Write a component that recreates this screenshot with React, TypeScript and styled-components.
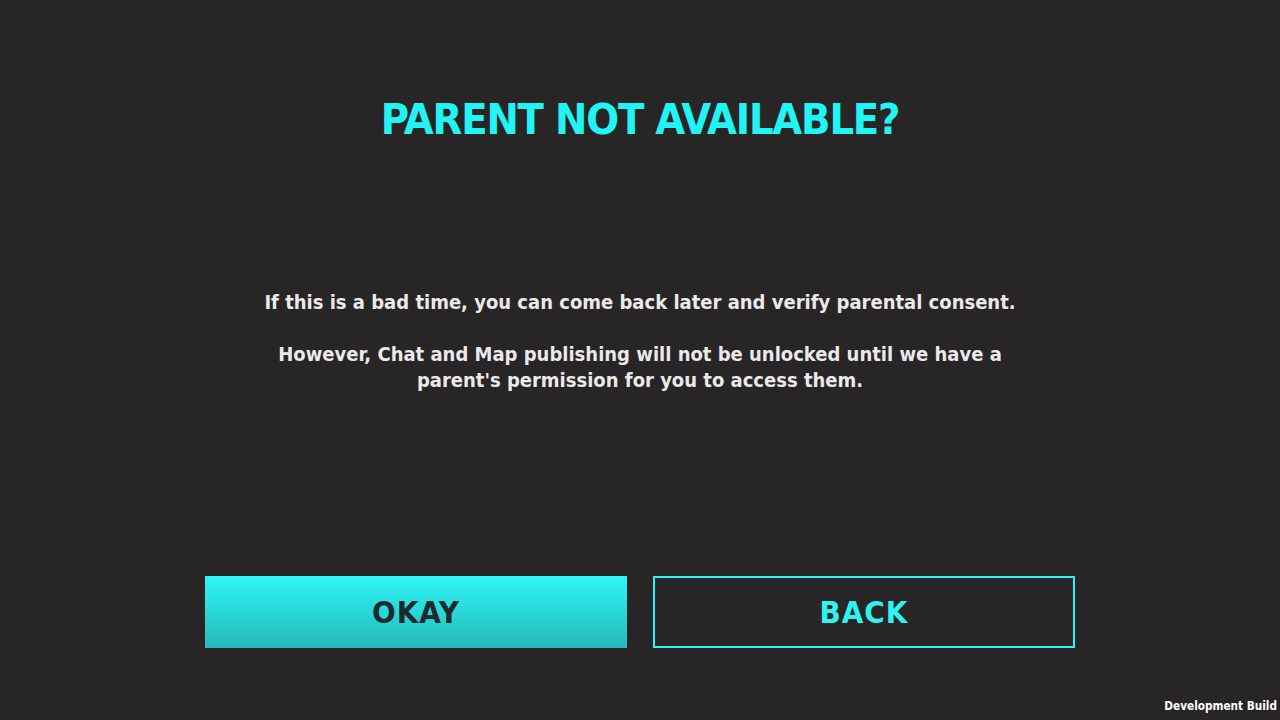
import React from "react";
import styled, { createGlobalStyle } from "styled-components";

const Global = createGlobalStyle`
  html, body { margin: 0; padding: 0; background: #282527; }
  body { font-family: "DejaVu Sans Condensed", "DejaVu Sans", sans-serif; }
`;

const Page = styled.div`
  position: relative;
  width: 1280px;
  height: 720px;
  background: #282527;
  display: flex;
  flex-direction: column;
  align-items: center;
  overflow: hidden;
`;

const Title = styled.h1`
  margin: 95px 0 0;
  font-family: "DejaVu Sans Condensed", "DejaVu Sans", sans-serif;
  font-weight: 700;
  font-size: 43px;
  line-height: 48px;
  color: #22f4f4;
  letter-spacing: -1.2px;
`;

const Body = styled.div`
  margin-top: 146px;
  width: 800px;
  text-align: center;
  color: #ebe9ea;
  font-weight: 700;
  font-size: 20px;
  line-height: 26px;
  letter-spacing: 0;
`;

const Para = styled.p`
  margin: 0 0 26px;
`;

const Spacer = styled.div`
  flex: 1;
`;

const ButtonRow = styled.div`
  display: flex;
  gap: 26px;
  margin-bottom: 72px;
`;

const Button = styled.button<{ $primary?: boolean }>`
  width: 422px;
  height: 72px;
  box-sizing: border-box;
  padding: 0;
  font-family: "DejaVu Sans Condensed", "DejaVu Sans", sans-serif;
  font-weight: 700;
  font-size: 31px;
  letter-spacing: 1px;
  cursor: pointer;
  border: ${(p) => (p.$primary ? "none" : "2px solid #2ff2f2")};
  color: ${(p) => (p.$primary ? "#1f2a2b" : "#2ff2f2")};
  background: ${(p) =>
    p.$primary ? "linear-gradient(180deg, #2ff6f6 0%, #26b9ba 100%)" : "transparent"};
`;

const DevBuild = styled.div`
  position: absolute;
  right: 3px;
  bottom: 7px;
  color: #ffffff;
  font-weight: 700;
  font-size: 11.7px;
`;

export default function App() {
  return (
    <>
      <Global />
      <Page>
        <Title>PARENT NOT AVAILABLE?</Title>
        <Body>
          <Para>If this is a bad time, you can come back later and verify parental consent.</Para>
          <Para>
            However, Chat and Map publishing will not be unlocked until we have a
            <br />
            parent's permission for you to access them.
          </Para>
        </Body>
        <Spacer />
        <ButtonRow>
          <Button $primary>OKAY</Button>
          <Button>BACK</Button>
        </ButtonRow>
        <DevBuild>Development Build</DevBuild>
      </Page>
    </>
  );
}
